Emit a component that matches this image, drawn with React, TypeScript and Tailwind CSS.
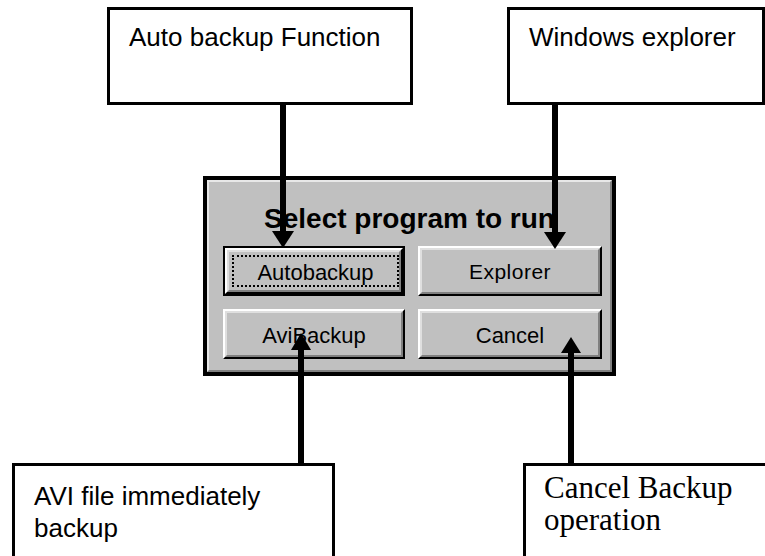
import React from "react";

interface NoteProps {
  className: string;
  children: React.ReactNode;
}

function Note({ className, children }: NoteProps) {
  return (
    <div className={`absolute border-[3px] border-black bg-white ${className}`}>
      {children}
    </div>
  );
}

interface WinButtonProps {
  label: string;
  isDefault?: boolean;
  textClass?: string;
}

function WinButton({ label, isDefault = false, textClass = "" }: WinButtonProps) {
  const bevel = (
    <div className="h-full border-2 border-t-white border-l-white border-r-black border-b-black">
      <div
        className={`h-full border-2 border-t-[#dfdfdf] border-l-[#dfdfdf] border-r-[#808080] border-b-[#808080] ${
          isDefault ? "pt-[3px] pb-[3px] pl-[3px]" : ""
        }`}
      >
        <div
          className={`h-full flex items-center justify-center pt-[2px] text-black ${textClass} ${
            isDefault ? "border-2 border-dotted border-black" : ""
          }`}
        >
          {label}
        </div>
      </div>
    </div>
  );

  return isDefault ? (
    <div className="h-[50px] border-2 border-black">{bevel}</div>
  ) : (
    <div className="h-[50px]">{bevel}</div>
  );
}

export default function App() {
  return (
    <div className="relative w-[765px] h-[556px] overflow-hidden bg-white font-['Liberation_Sans',Arial,sans-serif]">
      {/* callout boxes */}
      <Note className="left-[107px] top-[7px] w-[306px] h-[98px]">
        <p className="pl-[19px] pt-[12px] text-[26px] leading-[30px] text-black">
          Auto backup Function
        </p>
      </Note>
      <Note className="left-[507px] top-[7px] w-[258px] h-[98px]">
        <p className="pl-[19px] pt-[12px] text-[26px] leading-[30px] text-black">
          Windows explorer
        </p>
      </Note>
      <Note className="left-[12px] top-[463px] w-[323px] h-[110px]">
        <p className="pl-[19px] pt-[14px] text-[26px] leading-[32px] text-black">
          AVI file immediately
          <br />
          backup
        </p>
      </Note>
      <Note className="left-[523px] top-[463px] w-[260px] h-[110px]">
        <p className="pl-[18px] pt-[6px] text-[31px] leading-[32px] text-black font-['Liberation_Serif','Times_New_Roman',serif]">
          Cancel Backup
          <br />
          operation
        </p>
      </Note>

      {/* dialog */}
      <div className="absolute left-[203px] top-[176px] w-[413px] h-[200px] border-4 border-black">
        <div className="h-full border-2 border-t-[#e8e8e8] border-l-[#e8e8e8] border-r-[#808080] border-b-[#808080] bg-[#c0c0c0]">
          <div className="pt-[21px] text-center text-[28px] leading-[32px] font-bold text-black">
            Select program to run
          </div>
          <div className="mt-[11px] pl-[14px] pr-[8px] grid grid-cols-[182px_184px] gap-x-[13px] gap-y-[13px]">
            <WinButton label="Autobackup" isDefault textClass="text-[22px]" />
            <WinButton label="Explorer" textClass="text-[21px] tracking-[0.5px]" />
            <WinButton label="AviBackup" textClass="text-[22px]" />
            <WinButton label="Cancel" textClass="text-[22px]" />
          </div>
        </div>
      </div>

      {/* arrows */}
      <svg
        className="absolute inset-0 pointer-events-none"
        width="765"
        height="556"
        viewBox="0 0 765 556"
      >
        <rect x="280" y="104" width="6" height="130" fill="#000" />
        <polygon points="272,231 294,231 283,248" fill="#000" />
        <rect x="552" y="104" width="6" height="130" fill="#000" />
        <polygon points="544,232 566,232 555,249" fill="#000" />
        <rect x="298" y="348" width="6" height="116" fill="#000" />
        <polygon points="291,350 311,350 301,333" fill="#000" />
        <rect x="568" y="351" width="6" height="113" fill="#000" />
        <polygon points="561,353 581,353 571,337" fill="#000" />
      </svg>
    </div>
  );
}
